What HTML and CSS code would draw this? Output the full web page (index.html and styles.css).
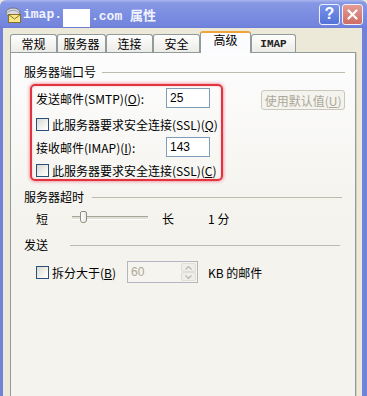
FILE: index.html
```html
<!DOCTYPE html>
<html>
<head>
<meta charset="utf-8">
<link rel="stylesheet" href="styles.css">
</head>
<body>
<div class="window">
  <div class="titlebar">
    <svg class="app-icon" width="17" height="16" viewBox="0 0 17 16">
      <ellipse cx="8" cy="5.5" rx="7" ry="4.5" fill="#d8dadf" stroke="#6f737c" stroke-width="1"/>
      <path d="M2 5.5 Q8 1 14 5.5" fill="none" stroke="#9ea3ad" stroke-width="1"/>
      <rect x="3.5" y="7.5" width="12" height="8" fill="#f8e88a" stroke="#8a7128" stroke-width="1"/>
      <path d="M3.5 7.5 L9.5 12 L15.5 7.5" fill="none" stroke="#8a7128" stroke-width="1"/>
    </svg>
    <div class="title">imap.<span class="mask"></span>.com 属性</div>
    <div class="tb-buttons">
      <div class="tb-btn help">?</div>
      <div class="tb-btn close">
        <svg width="11" height="11" viewBox="0 0 11 11"><path d="M1.5 1.5 L9.5 9.5 M9.5 1.5 L1.5 9.5" stroke="#fff" stroke-width="2.2" stroke-linecap="round"/></svg>
      </div>
    </div>
  </div>
  <div class="frame">
    <div class="tabs">
      <div class="tab t1">常规</div>
      <div class="tab t2">服务器</div>
      <div class="tab t3">连接</div>
      <div class="tab t4">安全</div>
      <div class="tab active">高级</div>
      <div class="tab t6 latin">IMAP</div>
    </div>
    <div class="panel">
      <div class="group-head"><span>服务器端口号</span><div class="line l1"></div></div>
      <div class="port-row">
        <div class="highlight">
          <div class="row r1"><span class="lbl">发送邮件(SMTP)(<u>O</u>):</span><div class="input">25</div></div>
          <div class="row r2"><span class="cb"></span><span>此服务器要求安全连接(SSL)(<u>Q</u>)</span></div>
          <div class="row r3"><span class="lbl">接收邮件(IMAP)(<u>I</u>):</span><div class="input">143</div></div>
          <div class="row r4"><span class="cb"></span><span>此服务器要求安全连接(SSL)(<u>C</u>)</span></div>
        </div>
        <div class="btn disabled">使用默认值(<u>U</u>)</div>
      </div>

      <div class="group-head g2"><span>服务器超时</span><div class="line l2"></div></div>
      <div class="slider-row">
        <span>短</span>
        <div class="track"><div class="thumb"></div></div>
        <span class="long">长</span>
        <span class="minutes">1 分</span>
      </div>

      <div class="group-head g3"><span>发送</span><div class="line l3"></div></div>
      <div class="split-row">
        <span class="cb"></span>
        <span class="split-lbl">拆分大于(<u>B</u>)</span>
        <div class="spinner">
          <span class="spin-val">60</span>
          <div class="spin-btns">
            <div class="spin-up"><svg width="7" height="4" viewBox="0 0 7 4"><path d="M0.5 3.5 L3.5 0.5 L6.5 3.5" fill="none" stroke="#b8b8b0" stroke-width="1.2"/></svg></div>
            <div class="spin-down"><svg width="7" height="4" viewBox="0 0 7 4"><path d="M0.5 0.5 L3.5 3.5 L6.5 0.5" fill="none" stroke="#b8b8b0" stroke-width="1.2"/></svg></div>
          </div>
        </div>
        <span class="kb">KB 的邮件</span>
      </div>
    </div>
  </div>
</div>
</body>
</html>
```

FILE: styles.css
```css
html, body {
  margin: 0;
  padding: 0;
}
body {
  width: 367px;
  height: 396px;
  overflow: hidden;
  font-family: "Noto Sans CJK SC", "Liberation Sans", sans-serif;
  font-size: 12px;
  color: #000;
  background: #ece9d8;
}
u { text-decoration: underline; text-underline-offset: 1px; }

.window {
  height: 396px;
  display: flex;
  flex-direction: column;
}

/* title bar */
.titlebar {
  height: 28px;
  flex: none;
  display: flex;
  align-items: center;
  padding: 0 4px 0 5px;
  background: linear-gradient(#a9b6ee 0px, #8697e4 3px, #7c8ee1 14px, #7284dc 26px, #6a7cd6 28px);
  border-radius: 6px 6px 0 0;
}
.app-icon { flex: none; margin-top: 1px; }
.title {
  margin-left: 1px;
  height: 28px;
  display: flex;
  align-items: center;
  font-family: "Liberation Mono", "Noto Sans CJK SC", monospace;
  font-weight: bold;
  font-size: 13px;
  color: #f2f4ff;
  white-space: pre;
  letter-spacing: 0;
}
.mask {
  display: inline-block;
  width: 27px;
  height: 18px;
  margin: 9px 1px 0 1px;
  background: #fff;
  align-self: flex-start;
}
.tb-buttons {
  margin-left: auto;
  display: flex;
  gap: 2px;
}
.tb-btn {
  width: 19px;
  height: 19px;
  border: 1px solid #eef1ff;
  border-radius: 3px;
  display: flex;
  align-items: center;
  justify-content: center;
  color: #fff;
  font-family: "Liberation Sans", sans-serif;
  font-weight: bold;
  font-size: 16px;
}
.help { background: linear-gradient(#7893e8, #5473d8); }
.close { background: linear-gradient(#e39b93, #cf6d66); }

/* frame */
.frame {
  flex: 1;
  display: flex;
  flex-direction: column;
  background: #ece9d8;
  border-left: 3px solid #7182da;
  border-right: 5px solid #7182da;
  padding: 4px 6px 0 7px;
}

/* tabs */
.tabs {
  height: 20px;
  display: flex;
  align-items: flex-end;
  position: relative;
  z-index: 1;
}
.tab {
  height: 16px;
  box-sizing: content-box;
  border: 1px solid #919b9c;
  border-bottom: none;
  border-radius: 3px 3px 0 0;
  background: linear-gradient(#fefefe, #ecebe6);
  display: flex;
  align-items: center;
  justify-content: center;
  line-height: 1;
  padding-top: 1px;
}
.t1 { width: 45px; }
.t2 { width: 47px; }
.t3 { width: 45px; }
.t4 { width: 45px; }
.t6 { width: 43px; }
.latin { font-family: "Liberation Mono", monospace; font-size: 11px; font-weight: bold; color: #222; }
.tab.active {
  width: 49px;
  height: 19px;
  margin-bottom: -1px;
  border-top: 2px solid #f0a33a;
  background: #fcfcfe;
  padding-top: 0;
  align-items: flex-start;
  padding-top: 1px;
}

/* panel */
.panel {
  flex: 1;
  border: 1px solid #919b9c;
  border-bottom: none;
  background: linear-gradient(#fdfdfe 0px, #f4f3ee 160px);
  padding: 11px 10px 0 13px;
  box-shadow: 1px 0 0 #d4d0c4;
}
.group-head {
  height: 16px;
  display: flex;
  align-items: center;
  line-height: 16px;
}
.line { flex: 1; height: 1px; background: #bdbbae; }
.l1 { margin-left: 6px; }
.l2 { margin-left: 8px; margin-right: 3px; }
.l3 { margin-left: 22px; margin-right: 5px; }
.g2 { margin-top: 8px; }
.g3 { margin-top: 9px; }

.port-row {
  display: flex;
  align-items: flex-start;
  margin-top: 4px;
  padding-left: 6px;
}
.highlight {
  width: 194px;
  height: 97px;
  box-sizing: border-box;
  border: 2px solid #e2343f;
  border-radius: 5px;
  box-shadow: 0 0 3px 1px rgba(235, 90, 110, 0.55), inset 0 0 2px rgba(235, 90, 110, 0.4);
  padding: 2px 0 0 4px;
}
.row {
  display: flex;
  align-items: center;
  white-space: nowrap;
}
.r1, .r3 { height: 20px; }
.r2, .r4 { height: 16px; }
.r2 { margin-top: 8px; }
.r3 { margin-top: 5px; }
.r4 { margin-top: 5px; }
.lbl { width: 130px; }
.input {
  width: 44px;
  height: 20px;
  box-sizing: border-box;
  border: 1px solid #7f9db9;
  background: #fff;
  padding-left: 3px;
  font-family: "Liberation Sans", sans-serif;
  font-size: 12px;
  line-height: 18px;
}
.cb {
  width: 13px;
  height: 13px;
  box-sizing: border-box;
  border: 1px solid #2a4f78;
  background: linear-gradient(135deg, #d8d7d0, #f7f7f4 70%, #fff);
  margin-right: 3px;
  flex: none;
}
.btn {
  margin-left: 38px;
  margin-top: 6px;
  width: 84px;
  height: 20px;
  box-sizing: border-box;
  border: 1px solid #cac8bb;
  border-radius: 3px;
  background: #f4f3ee;
  color: #aca899;
  display: flex;
  align-items: center;
  justify-content: center;
  white-space: nowrap;
}

.slider-row {
  margin-top: 3px;
  height: 20px;
  display: flex;
  align-items: center;
  padding-left: 12px;
}
.track {
  margin-left: 24px;
  width: 76px;
  height: 2px;
  border-top: 1px solid #a8a698;
  border-bottom: 1px solid #fff;
  background: #e2e0d6;
  position: relative;
}
.thumb {
  position: absolute;
  left: 8px;
  top: -6px;
  width: 5px;
  height: 10px;
  border: 1px solid #8e8d85;
  border-radius: 2px 2px 3px 3px;
  background: linear-gradient(90deg, #fff, #e8e7e0);
}
.long { margin-left: 14px; }
.minutes { margin-left: 34px; }

.split-row {
  margin-top: 8px;
  height: 22px;
  display: flex;
  align-items: center;
  padding-left: 12px;
}
.split-lbl { width: 75px; white-space: nowrap; }
.spinner {
  width: 71px;
  height: 22px;
  box-sizing: border-box;
  border: 1px solid #b2b7c0;
  background: #f5f4ef;
  display: flex;
  align-items: center;
}
.spin-val {
  flex: 1;
  padding-left: 3px;
  color: #aca899;
  font-family: "Liberation Sans", sans-serif;
  font-size: 12px;
}
.spin-btns {
  width: 15px;
  height: 18px;
  margin-right: 1px;
  display: flex;
  flex-direction: column;
  gap: 0;
}
.spin-up, .spin-down {
  flex: 1;
  display: flex;
  align-items: center;
  justify-content: center;
  background: #efeee8;
  border: 1px solid #e0ded4;
  border-radius: 2px;
}
.kb { margin-left: 10px; }
```
